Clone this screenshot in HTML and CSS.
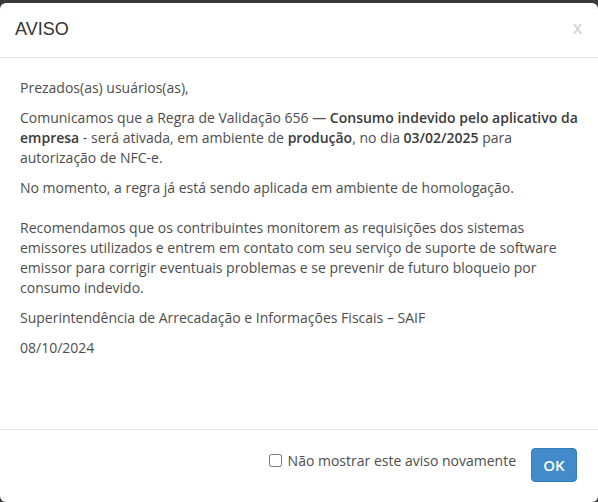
FILE: index.html
```html
<!DOCTYPE html>
<html>
<head>
<meta name="viewport" content="width=device-width, initial-scale=1">
<link rel="stylesheet" href="styles.css">
</head>
<body>
  <!-- Aviso modal -->
  <div class="modal">
    <div class="modal-header">
      <h4 class="modal-title">AVISO</h4>
      <span class="close">x</span>
    </div>
    <div class="modal-body">
      <p>Prezados(as) usuários(as),</p>
      <p>Comunicamos que a Regra de Validação 656 — <b>Consumo indevido pelo aplicativo da empresa</b> - será ativada, em ambiente de <b>produção</b>, no dia <b>03/02/2025</b> para autorização de NFC-e.</p>
      <p class="spaced">No momento, a regra já está sendo aplicada em ambiente de homologação.</p>
      <p>Recomendamos que os contribuintes monitorem as requisições dos sistemas emissores utilizados e entrem em contato com seu serviço de suporte de software emissor para corrigir eventuais problemas e se prevenir de futuro bloqueio por consumo indevido.</p>
      <p>Superintendência de Arrecadação e Informações Fiscais – SAIF</p>
      <p>08/10/2024</p>
    </div>
    <div class="modal-footer">
      <label class="check">
        <input type="checkbox">
        <span>Não mostrar este aviso novamente</span>
      </label>
      <button class="btn">OK</button>
    </div>
  </div>
</body>
</html>
```

FILE: styles.css
```css
/* Dark backdrop behind the modal */
body {
  margin: 0;
  background-color: #3b3b3b;
  font-family: "Open Sans", Arial, sans-serif;
  font-size: 14px;
  color: #4d4d4d;
}

.modal {
  margin-top: 3px;
  height: 499px;
  background-color: #fff;
  border-radius: 6px;
  display: flex;
  flex-direction: column;
}

/* Header with title and close */
.modal-header {
  display: flex;
  justify-content: space-between;
  align-items: center;
  padding: 14px 15px 15px 15px;
  border-bottom: 1px solid #e5e5e5;
}

.modal-title {
  margin: 0;
  font-family: "Liberation Sans", Arial, sans-serif;
  font-size: 18px;
  font-weight: normal;
  line-height: 25px;
  color: #333;
}

.close {
  font-family: "Liberation Sans", Arial, sans-serif;
  font-size: 18px;
  color: #cfcfcf;
  margin-right: 1px;
  margin-bottom: 3px;
}

/* Message text */
.modal-body {
  flex: 1;
  padding: 20px 20px 0 20px;
}

.modal-body p {
  margin: 0 0 10px 0;
  line-height: 20px;
}

.modal-body p.spaced {
  margin-bottom: 20px;
}

.modal-body b {
  font-weight: 600;
  color: #3a3a3a;
}

/* Footer with checkbox and button */
.modal-footer {
  display: flex;
  justify-content: flex-end;
  align-items: center;
  height: 73px;
  padding: 0 21px 2px 20px;
  border-top: 1px solid #e5e5e5;
  box-sizing: border-box;
}

.check {
  display: flex;
  align-items: center;
  margin-bottom: 10px;
  font-size: 14px;
}

.check input {
  margin: 0 6px 0 0;
  width: 13px;
  height: 13px;
}

.btn {
  margin-left: 15px;
  width: 46px;
  height: 34px;
  border: 1px solid #357ebd;
  border-radius: 4px;
  background-color: #428bca;
  color: #fff;
  font-family: "Open Sans", Arial, sans-serif;
  font-size: 15px;
  font-weight: 600;
}
```
